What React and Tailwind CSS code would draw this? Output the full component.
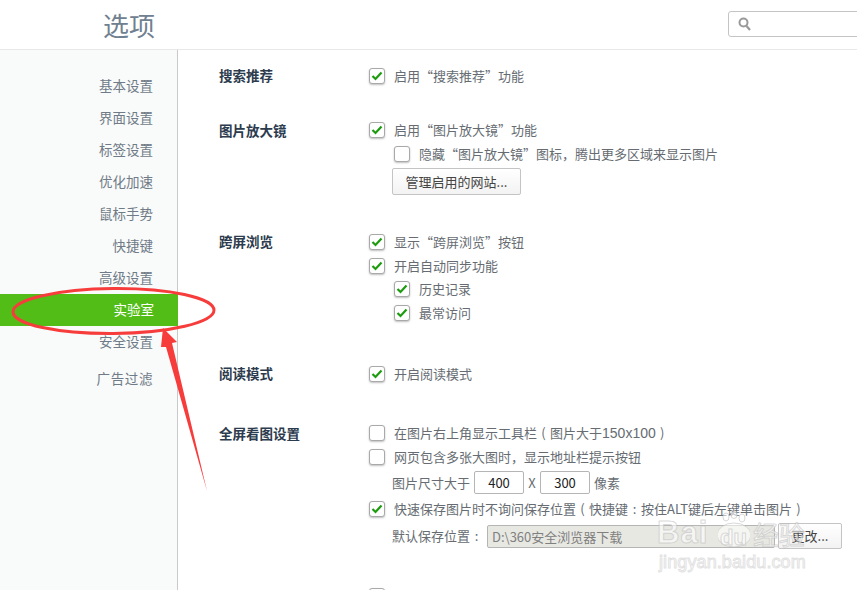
import React from 'react';

const navItems = ['基本设置', '界面设置', '标签设置', '优化加速', '鼠标手势', '快捷键', '高级设置', '实验室', '安全设置'];

// the reference font centres these marks in a full-width cell
const Mark = ({ children }) => <span className="inline-block w-[13px] text-center">{children}</span>;

const Checkbox = ({ checked }) => (
  <span className="w-4 h-4 shrink-0 flex items-center justify-center rounded-[3px] border border-[#a9a9a9] bg-white shadow-[0_1px_2px_rgba(0,0,0,0.25)]">
    {checked && (
      <svg width="12" height="10" viewBox="0 0 12 10">
        <path d="M1.5 5 L4.5 8 L10.5 1.5" fill="none" stroke="#1c9c0c" strokeWidth="2.2" />
      </svg>
    )}
  </span>
);

const Row = ({ checked, indent, className = '', children }) => (
  <div className={`flex items-center h-6 ${indent ? 'pl-[25px]' : ''} ${className}`}>
    <Checkbox checked={checked} />
    <span className="ml-[9px] whitespace-nowrap">{children}</span>
  </div>
);

const Section = ({ title, className = '', titleClass = '', children }) => (
  <section className={`flex ${className}`}>
    <h3 className={`w-[150px] shrink-0 h-6 leading-[22px] text-[13.5px] font-bold text-[#2c3b4d] ${titleClass}`}>{title}</h3>
    <div className="flex-1">{children}</div>
  </section>
);

const SizeInput = ({ value }) => (
  <span className="w-[50px] h-[23px] flex items-center justify-center rounded-[2px] border border-[#b5b5b5] bg-white text-[13px] text-[#222]">
    {value}
  </span>
);

export default function App() {
  return (
    <div className="relative w-[857px] h-[590px] overflow-hidden bg-white text-[13px] text-[#666c72] font-['Noto_Sans_CJK_SC','Liberation_Sans',sans-serif]">
      <header className="h-[50px] flex items-center justify-between border-b border-[#e8e8e8] pl-[103px]">
        <h1 className="text-[26px] leading-none font-normal text-[#6f8090]">选项</h1>
        <div className="w-[140px] h-[26px] -mr-[11px] mb-[1px] flex items-center pl-[9px] rounded-[3px] border border-[#c4c4c4] bg-white">
          <svg width="13" height="14" viewBox="0 0 13 14">
            <circle cx="5.5" cy="5.5" r="4" fill="none" stroke="#999" strokeWidth="2" />
            <path d="M8.5 9 L12 13" stroke="#999" strokeWidth="2.2" />
          </svg>
        </div>
      </header>

      <div className="flex h-[540px]">
        <nav className="w-[178px] shrink-0 pt-5 bg-[#f9fafa] border-r border-[#c9c9c9] text-[13.5px] text-[#6f7b87]">
          {navItems.map((item) => (
            <div
              key={item}
              className={`h-8 leading-[30px] text-right pr-6 ${item === '实验室' ? 'bg-[#52bd17] text-white -mr-px' : ''}`}
            >
              {item}
            </div>
          ))}
          <div className="h-8 mt-[5px] leading-[30px] text-right pr-6 tracking-[0.6px]">广告过滤</div>
        </nav>

        <main className="flex-1 pl-[41px] pt-[14px]">
          <Section title="搜索推荐">
            <Row checked>启用“搜索推荐”功能</Row>
          </Section>

          <Section title="图片放大镜" className="mt-[31px]">
            <Row checked className="-mt-px">启用“图片放大镜”功能</Row>
            <Row indent>隐藏“图片放大镜”图标，腾出更多区域来显示图片</Row>
            <button className="block mt-[2px] ml-[23px] w-[129px] h-[27px] rounded-[2px] border border-[#c4c4c4] bg-gradient-to-b from-white to-[#f3f3f3] text-[13px] text-[#444]">
              管理启用的网站...
            </button>
          </Section>

          <Section title="跨屏浏览" className="mt-[35px]">
            <Row checked>显示“跨屏浏览”按钮</Row>
            <Row checked>开启自动同步功能</Row>
            <Row checked indent className="-mt-px">历史记录</Row>
            <Row checked indent>最常访问</Row>
          </Section>

          <Section title="阅读模式" className="mt-[37px]">
            <Row checked>开启阅读模式</Row>
          </Section>

          <Section title="全屏看图设置" className="mt-[35px]" titleClass="mt-px">
            <Row>
              在图片右上角显示工具栏<Mark>(</Mark>图片大于<span className="font-['Liberation_Sans',sans-serif] text-sm">150x100</span><Mark>)</Mark>
            </Row>
            <Row>网页包含多张大图时，显示地址栏提示按钮</Row>
            <div className="flex items-center h-[23px] mt-[2px] ml-[23px]">
              <span className="w-[82px]">图片尺寸大于</span>
              <SizeInput value="400" />
              <span className="w-4 text-center">X</span>
              <SizeInput value="300" />
              <span className="ml-1">像素</span>
            </div>
            <Row checked className="mt-[3px]">
              快速保存图片时不询问保存位置<Mark>(</Mark>快捷键<Mark>:</Mark>按住ALT键后左键单击图片<Mark>)</Mark>
            </Row>
            <div className="flex items-center h-[26px] mt-[2px] ml-[23px]">
              <span className="w-[95px]">默认保存位置<Mark>:</Mark></span>
              <span className="w-[288px] h-[23px] leading-[21px] pl-1 rounded-[2px] border border-[#b5b5b5] bg-[#e8e8e3] text-[#808080]">
                D:\360安全浏览器下载
              </span>
              <button className="ml-[3px] w-16 h-[26px] rounded-[2px] border border-[#c4c4c4] bg-gradient-to-b from-white to-[#f3f3f3] text-[13px] text-[#444]">
                更改...
              </button>
            </div>
            <Row className="mt-[35px]" />
          </Section>
        </main>
      </div>

      {/* red annotation drawn over the screenshot */}
      <svg className="absolute inset-0 pointer-events-none" width="857" height="590" viewBox="0 0 857 590">
        <ellipse cx="113.5" cy="311" rx="100.5" ry="22.5" fill="none" stroke="#f73c3c" strokeWidth="3" transform="rotate(-0.5 113.5 311)" />
        <polygon points="163,328 177,342 172,343 207,491 166,347 161,347" fill="#f73c3c" />
      </svg>

      {/* baidu watermark */}
      <svg className="absolute left-[718px] top-[511px] pointer-events-none" width="32" height="36" viewBox="0 0 32 36">
        <g fill="rgba(255,255,255,0.55)" stroke="rgba(190,190,190,0.6)">
          <ellipse cx="8" cy="6" rx="3" ry="4" />
          <ellipse cx="16" cy="4" rx="3" ry="3.5" />
          <ellipse cx="24" cy="7" rx="3" ry="4" />
          <ellipse cx="16" cy="24" rx="17" ry="12" />
        </g>
      </svg>
      <div className="absolute left-[657px] top-[518px] flex items-center h-[30px] pointer-events-none font-['Liberation_Sans',sans-serif] font-bold text-white/60 [-webkit-text-stroke:1px_rgba(185,185,185,0.55)]">
        <span className="w-[57px] text-[31px] tracking-[1px]">Bai</span>
        <span className="w-[39px] text-[22px] text-center mt-2">du</span>
        <span className="text-[26px] font-['Noto_Sans_CJK_SC',sans-serif] font-normal">经验</span>
      </div>
      <div className="absolute left-[659px] top-[552px] text-[18px] leading-5 tracking-[0.1px] font-['Liberation_Sans',sans-serif] text-white/60 [-webkit-text-stroke:1px_rgba(200,200,200,0.55)] pointer-events-none">
        jingyan.baidu.com
      </div>
    </div>
  );
}
